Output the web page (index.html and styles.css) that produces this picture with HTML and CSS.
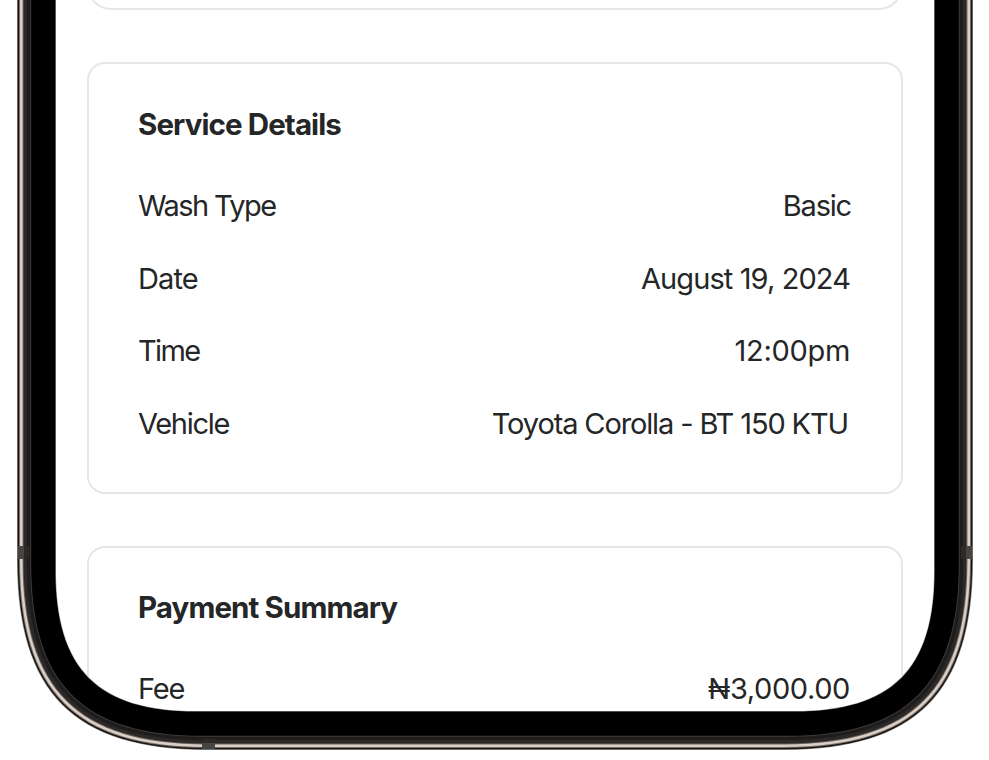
FILE: index.html
```html
<!DOCTYPE html>
<html lang="en">
<head>
<meta charset="utf-8">
<title>Booking summary</title>
<link rel="stylesheet" href="styles.css">
</head>
<body>
<svg class="phone" viewBox="0 0 989 760" aria-hidden="true">
  <path fill="#8b8986" d="M17,0V560C17,693 74,750 207,750H783C916,750 973,693 973,560V0Z"/>
  <path fill="#171413" d="M17.7,0V560.2C17.7,692.6 74.4,749.3 206.8,749.3H783.2C915.6,749.3 972.3,692.6 972.3,560.2V0Z"/>
  <path fill="#746a63" d="M19,0V560.6C19,691.8 75.2,748 206.4,748H783.6C914.8,748 971,691.8 971,560.6V0Z"/>
  <path fill="#dacfc7" d="M20,0V560.8C20,691.1 75.9,747 206.2,747H783.8C914.1,747 970,691.1 970,560.8V0Z"/>
  <path fill="#66605c" d="M22.6,0V561.6C22.6,689.5 77.5,744.4 205.4,744.4H784.6C912.5,744.4 967.4,689.5 967.4,561.6V0Z"/>
  <path fill="#2b2827" d="M23.6,0V561.8C23.6,688.9 78.1,743.4 205.2,743.4H784.8C911.9,743.4 966.4,688.9 966.4,561.8V0Z"/>
  <path fill="#1f1c1c" d="M27,0V562.8C27,686.8 80.2,740 204.2,740H785.8C909.8,740 963,686.8 963,562.8V0Z"/>
  <path fill="#403e3e" d="M30.3,0V563.7C30.3,684.8 82.2,736.7 203.3,736.7H786.7C907.8,736.7 959.7,684.8 959.7,563.7V0Z"/>
  <path fill="#000" d="M31.2,0V564C31.2,684.3 82.7,735.8 203,735.8H787C907.3,735.8 958.8,684.3 958.8,564V0Z"/>
  <path fill="#9b9b9b" d="M55.4,0V570.8C55.4,669.4 97.6,711.6 196.2,711.6H793.8C892.4,711.6 934.6,669.4 934.6,570.8V0Z"/>
  <g fill="#474543">
    <path d="M18,546h6v13h-6zM966,546h6v13h-6zM202,743h13v6h-13z"/>
    <path fill="#2c2a29" d="M24,546h5v13h-5zM961,546h5v13h-5zM202,739h13v4h-13z"/>
  </g>
</svg>
<main class="screen">
  <section class="card card-previous"></section>
  <section class="card">
    <h2 class="title">Service Details</h2>
    <dl class="rows">
      <div class="row"><dt class="wash">Wash Type</dt><dd class="basic">Basic</dd></div>
      <div class="row"><dt class="date">Date</dt><dd class="day">August 19, 2024</dd></div>
      <div class="row"><dt class="time">Time</dt><dd class="hour">12:00pm</dd></div>
      <div class="row"><dt class="vehicle">Vehicle</dt><dd class="car">Toyota Corolla - BT 150 KTU</dd></div>
    </dl>
  </section>
  <section class="card card-payment">
    <h2 class="title">Payment Summary</h2>
    <dl class="rows">
      <div class="row"><dt class="fee">Fee</dt><dd class="amount">₦3,000.00</dd></div>
    </dl>
  </section>
</main>
</body>
</html>
```
FILE: styles.css
```css
* { box-sizing: border-box; }
body {
  margin: 0;
  height: 760px;
  overflow: hidden;
  background: #fff;
  color: #242627;
  font-family: Inter, "Liberation Sans", sans-serif;
}
.phone {
  position: absolute;
  inset: 0;
  width: 989px;
  height: 760px;
}
.screen {
  position: relative;
  width: 878px;
  height: 711px;
  margin-left: 56px;
  padding: 0 31px;
  overflow: hidden;
  background: #fff;
  clip-path: path("M0,0V571C0,669 42,711 140,711H738C836,711 878,669 878,571V0Z");
}
.card {
  height: 432px;
  margin-bottom: 52px;
  padding: 42px 51px 0 49px;
  border: 2px solid #e5e7e7;
  border-radius: 18px;
}
.card-previous {
  height: 50px;
  margin-top: -40px;
  border-radius: 24px;
}
.card-payment { padding-top: 41px; }
.title {
  margin: 0;
  font-size: 29.5px;
  line-height: 36px;
  font-weight: 700;
  letter-spacing: -0.9px;
}
.rows { margin: 28px 0 0; }
.row {
  display: flex;
  justify-content: space-between;
  height: 72.6px;
  font-size: 29px;
  line-height: 72.6px;
  white-space: nowrap;
  letter-spacing: -0.9px;
}
dd { margin: 0; }
.wash { letter-spacing: -1.6px; }
.time { letter-spacing: -1.6px; }
.vehicle { letter-spacing: -1.3px; }
.fee { letter-spacing: -1.2px; }
.basic { letter-spacing: -1.2px; margin-right: -1px; }
.hour { letter-spacing: -0.3px; }
.car { letter-spacing: -1.13px; margin-right: 2px; }
.amount { letter-spacing: -0.4px; }
```
